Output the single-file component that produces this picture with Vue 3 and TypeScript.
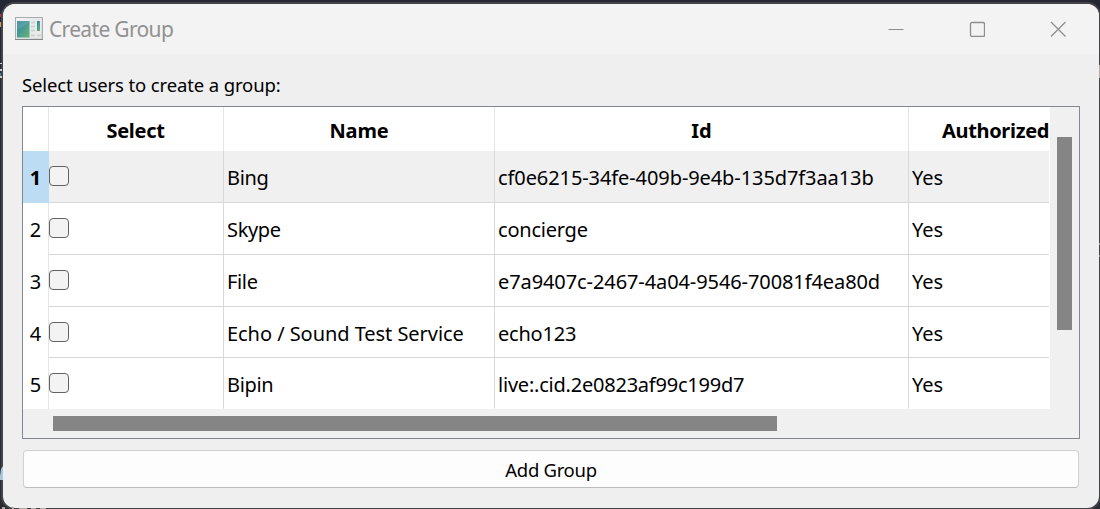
<script setup lang="ts">
interface User {
  name: string
  id: string
  authorized: string
  kind: string
}

const users: User[] = [
  { name: 'Bing', id: 'cf0e6215-34fe-409b-9e4b-135d7f3aa13b', authorized: 'Yes', kind: 'guid' },
  { name: 'Skype', id: 'concierge', authorized: 'Yes', kind: 'word' },
  { name: 'File', id: 'e7a9407c-2467-4a04-9546-70081f4ea80d', authorized: 'Yes', kind: 'guid' },
  { name: 'Echo / Sound Test Service', id: 'echo123', authorized: 'Yes', kind: 'word' },
  { name: 'Bipin', id: 'live:.cid.2e0823af99c199d7', authorized: 'Yes', kind: 'live' },
]
</script>

<template>
  <div class="desktop">
    <svg class="backdrop" width="1100" height="509" viewBox="0 0 1100 509">
      <path d="M0 14h1v3h-1z" fill="#d03040" />
      <path d="M0 22h1v5h-1z" fill="#d59a5a" />
      <path d="M0 63h2v1h-2zM0 69h2v2h-2zM0 76h2v2h-2z" fill="#c9cbd2" />
      <path d="M0 73h1v3h-1z" fill="#4c76ac" />
      <path d="M1 469l2-3v14h-3v-4z" fill="#a9c8d8" />
      <path d="M2 507h3v2h-3zM12 507h2v2h-2zM19 508h8v1h-8zM31 508h5v1h-5zM40 508h6v1h-6z" fill="#b4a79c" />
      <path d="M1099 65h1v13h-1z" fill="#bcae9e" />
      <path d="M1099 243h1v2h-1zM1099 255h1v2h-1z" fill="#9c9ca0" />
    </svg>
    <div class="dialog">
      <header class="titlebar">
        <svg class="app-icon" width="28" height="24" viewBox="0 0 28 24">
          <defs>
            <linearGradient id="pane" x1="0" y1="0" x2="1" y2="1">
              <stop offset="0" stop-color="#347f9f" />
              <stop offset="0.5" stop-color="#4b9c92" />
              <stop offset="1" stop-color="#66b873" />
            </linearGradient>
            <linearGradient id="chrome" x1="0" y1="0" x2="1" y2="1">
              <stop offset="0" stop-color="#f5f6f8" />
              <stop offset="1" stop-color="#d3d5d6" />
            </linearGradient>
          </defs>
          <rect x="0.5" y="0.5" width="27" height="22" fill="url(#chrome)" stroke="#a9abad" />
          <path d="M0 22.5h28" stroke="#85878a" />
          <rect x="2" y="4" width="12.5" height="16.500" fill="url(#pane)" />
          <path d="M2 12Q8 11 14.500 4.500V4H2Z" fill="#8bbac8" opacity="0.3" />
          <rect x="15" y="3" width="11" height="18" fill="#e9eaec" />
          <path d="M16 5.500h4M16 9.500h4M16 13.500h4M16 18.500h4M22 18.500h4" stroke="#cfd1d3" stroke-width="2" />
          <rect x="22" y="4" width="3" height="10" fill="url(#pane)" />
        </svg>
        <span class="title">Create Group</span>
        <div class="controls">
          <svg width="16" height="16" viewBox="0 0 16 16"><path d="M0.500 8.500h15" stroke-width="1" /></svg>
          <svg width="16" height="16" viewBox="0 0 16 16"><rect x="1.500" y="1.500" width="14" height="14" rx="1.500" /></svg>
          <svg width="16" height="16" viewBox="0 0 16 16"><path d="M1 1L15.500 15.500M15.500 1L1 15.500" /></svg>
        </div>
      </header>

      <main class="body">
        <p class="prompt">Select users to create a group:</p>
        <div class="frame">
          <div class="view">
            <div class="row head">
              <div class="corner"></div>
              <div class="cell"><span class="h-select">Select</span></div>
              <div class="cell"><span class="h-name">Name</span></div>
              <div class="cell"><span>Id</span></div>
              <div class="cell"><span class="h-auth">Authorized</span></div>
            </div>
            <div v-for="(user, i) in users" :key="user.id" class="row" :class="{ current: i === 0 }">
              <div class="index">{{ i + 1 }}</div>
              <div class="cell check"><span class="box"></span></div>
              <div class="cell"><span class="name" :class="{ long: user.name.length > 10 }">{{ user.name }}</span></div>
              <div class="cell"><span :class="user.kind">{{ user.id }}</span></div>
              <div class="cell"><span>{{ user.authorized }}</span></div>
            </div>
          </div>
          <div class="vbar"><div class="vthumb"></div></div>
          <div class="hbar"><div class="hthumb"></div></div>
        </div>
        <button class="add" type="button">Add Group</button>
      </main>
    </div>
  </div>
</template>

<style>
body {
  margin: 0;
  overflow: hidden;
}
</style>

<style scoped>
.desktop {
  position: relative;
  box-sizing: border-box;
  width: 1100px;
  height: 509px;
  padding: 4px 1px 1px 3px;
  background: linear-gradient(#252735, #292b34);
  font-family: "Noto Sans", "Open Sans", sans-serif;
}
.backdrop {
  position: absolute;
  top: 0;
  left: 0;
  z-index: 1;
  pointer-events: none;
}
.dialog {
  height: 504px;
  border-radius: 12px;
  overflow: hidden;
  background: #efefef;
  box-shadow: 0 0 0 2px #43444a;
}
.titlebar {
  display: flex;
  align-items: center;
  height: 50px;
  padding-left: 12px;
  background: #f3f3f3;
}
.app-icon {
  display: block;
  margin-top: -1px;
}
.title {
  margin-left: 6px;
  color: #919191;
  font-size: 21px;
  line-height: 28px;
  letter-spacing: -0.67px;
}
.controls {
  display: flex;
  gap: 65px;
  margin: -1px 33px 0 auto;
}
.controls svg {
  display: block;
  fill: none;
  stroke: #8d8d8d;
  stroke-width: 1.3;
}
.body {
  padding: 0 19px;
}
.prompt {
  height: 52px;
  margin: 0;
  padding-top: 19px;
  box-sizing: border-box;
  font-size: 18.5px;
  line-height: 24px;
  letter-spacing: -0.13px;
  white-space: nowrap;
}
.frame {
  box-sizing: border-box;
  display: grid;
  grid-template-columns: 1027px 29px;
  grid-template-rows: 302px 29px;
  width: 1058px;
  height: 333px;
  border: 1px solid #828790;
}
.view {
  overflow: hidden;
  background: #fff;
}
.row {
  display: grid;
  grid-template-columns: 25px 176px 271px 414px 140px;
  width: 1026px;
  height: 52px;
  font-size: 20px;
}
.row:nth-child(n + 5) {
  height: 51px;
}
.row.head {
  width: 1027px;
  height: 44px;
  font-weight: 700;
}
.cell {
  box-sizing: border-box;
  display: flex;
  align-items: center;
  border-right: 1px solid #d8d8d8;
  border-bottom: 1px solid #d8d8d8;
  padding: 2px 0 0 3px;
  white-space: nowrap;
}
.cell:last-child {
  border-right: 0;
}
.row:last-child .cell {
  border-bottom-color: transparent;
  background-clip: padding-box;
}
.head .cell {
  justify-content: center;
  border-bottom: 0;
  border-color: #e5e5e5;
  padding: 2px 0 0;
}
.head .cell:last-child {
  justify-content: flex-start;
  padding-left: 33px;
}
.h-select {
  letter-spacing: -0.3px;
}
.h-name {
  letter-spacing: -0.2px;
}
.h-auth {
  letter-spacing: -0.33px;
}
.name {
  letter-spacing: -0.35px;
}
.name.long {
  letter-spacing: -0.05px;
}
.guid {
  letter-spacing: -0.09px;
}
.word,
.live {
  letter-spacing: -0.22px;
}
.corner,
.index {
  box-sizing: border-box;
  border-right: 1px solid #e5e5e5;
  margin-right: -1px;
  z-index: 1;
}
.index {
  display: flex;
  align-items: center;
  justify-content: center;
  padding-top: 1px;
}
.current {
  background: #f0f0f0;
}
.current .index {
  background: #bcdcf4;
  border-color: #bcdcf4;
  font-weight: 700;
}
.cell.check {
  padding: 0 0 1px 1px;
}
.box {
  box-sizing: border-box;
  width: 20px;
  height: 20px;
  border: 1px solid #626262;
  border-radius: 4px;
  background: #f3f3f3;
}
.vbar,
.hbar {
  display: flow-root;
  background: #f0f0f0;
}
.hbar {
  grid-column: 1 / 3;
}
.vthumb {
  width: 15px;
  height: 193px;
  margin: 30px 0 0 7px;
  background: #858585;
}
.hthumb {
  width: 724px;
  height: 15px;
  margin: 7px 0 0 30px;
  background: #858585;
}
.add {
  display: flex;
  align-items: center;
  justify-content: center;
  box-sizing: border-box;
  width: 1056px;
  height: 38px;
  margin: 11px 0 0 1px;
  padding: 1px 0 0;
  border: 1px solid #d0d0d0;
  border-bottom-color: #bdbdbd;
  border-radius: 4px;
  background: #fdfdfd;
  color: #000;
  font-family: inherit;
  font-size: 18.5px;
  letter-spacing: -0.3px;
}
</style>
